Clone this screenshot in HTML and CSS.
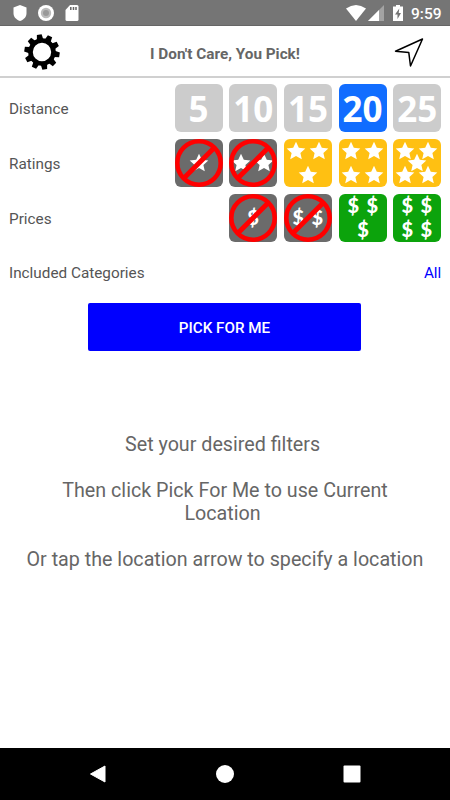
FILE: index.html
```html
<!DOCTYPE html>
<html lang="en">
<head>
    <meta charset="UTF-8">
    <meta name="viewport" content="width=device-width, initial-scale=1.0">
    <title>I Don't Care, You Pick!</title>
    <link rel="stylesheet" href="styles.css">
</head>
<body>
    <!-- shared shapes for the filter tiles -->
    <svg class="defs" width="0" height="0">
        <symbol id="star" viewBox="-10 -10 20 20" overflow="visible">
            <path d="M0-9.2 2.8-3.2 9.3-2.6 4.4 1.9 5.8 8.3 0 5-5.8 8.3-4.4 1.9-9.3-2.6-2.8-3.2Z"/>
        </symbol>
        <symbol id="ban" viewBox="0 0 48 48">
            <path d="M8.5 39.5 39.5 8.5" stroke="#f00" stroke-width="5"/>
            <circle cx="24" cy="24" r="21.7" fill="none" stroke="#f00" stroke-width="4.6"/>
        </symbol>
    </svg>

    <div class="status-bar">
        <div class="status-left">
            <svg width="14" height="18" viewBox="0 0 14 18"><path d="M7 1 13.5 3.500V9c0 4-2.500 6.500-6.500 8C3 15.500.5 13 .5 9V3.500Z" fill="#fff"/></svg>
            <svg width="16" height="16" viewBox="0 0 16 16"><circle cx="8" cy="8" r="8" fill="#fff"/><circle cx="8" cy="8" r="5.200" fill="#bbb"/><circle cx="8" cy="8" r="3" fill="#999"/></svg>
            <svg width="14" height="16" viewBox="0 0 14 16"><path d="M5 0h7q1.500 0 1.500 1.500v13q0 1.500-1.500 1.500H2Q.5 16 .5 14.500V5Z" fill="#fff"/><path d="M5.800 2v3M8.500 2v3M11 2v3" stroke="#666" stroke-width="1.500"/></svg>
        </div>
        <div class="status-right">
            <svg width="20" height="16" viewBox="0 0 20 16"><path d="M0 3.500Q10-3.500 20 3.500L10 16Z" fill="#fff"/></svg>
            <svg width="16" height="16" viewBox="0 0 16 16"><path d="M16 0v16H0Z" fill="#a3a3a3"/><path d="M11 5v11H0Z" fill="#fff"/></svg>
            <svg class="battery" width="10" height="16" viewBox="0 0 10 16"><path d="M0 1.500h3V0h4v1.500h3V16H0Z" fill="#fff"/><path d="M6.300 3.500 2 9.500h2.500V14L8 8H5.700Z" fill="#757575"/></svg>
            <span class="clock">9:59</span>
        </div>
    </div>

    <div class="header">
        <svg class="gear" width="36" height="36" viewBox="-18 -18 36 36">
            <circle r="11.500" fill="none" stroke="#000" stroke-width="4.600"/>
            <g id="teeth"></g>
        </svg>
        <h1>I Don't Care, You Pick!</h1>
        <svg class="arrow" width="30" height="30" viewBox="0 0 30 30"><path d="M1.500 13.200 28.500 1 16.500 28 14.800 14.600Z" fill="none" stroke="#000" stroke-width="1.500" stroke-linejoin="round"/></svg>
    </div>

    <div class="filters">
        <div class="filter-row">
            <span>Distance</span>
            <div class="tiles">
                <div class="tile">5</div>
                <div class="tile">10</div>
                <div class="tile">15</div>
                <div class="tile selected">20</div>
                <div class="tile">25</div>
            </div>
        </div>
        <div class="filter-row">
            <span>Ratings</span>
            <div class="tiles" id="ratings"></div>
        </div>
        <div class="filter-row">
            <span>Prices</span>
            <div class="tiles" id="prices"></div>
        </div>
        <div class="filter-row">
            <span>Included Categories</span>
            <a class="all">All</a>
        </div>
    </div>

    <button class="pick">PICK FOR ME</button>

    <div class="help">
        <p>Set your desired filters&nbsp;</p>
        <p>Then click Pick For Me to use Current Location&nbsp;</p>
        <p>Or tap the location arrow to specify a location</p>
    </div>

    <div class="nav-bar">
        <svg width="18" height="18" viewBox="0 0 18 18"><path d="M1.500 9 16 1v16Z" fill="#fff" stroke="#fff" stroke-linejoin="round"/></svg>
        <svg width="18" height="18" viewBox="0 0 18 18"><circle cx="9" cy="9" r="9" fill="#fff"/></svg>
        <svg width="18" height="18" viewBox="0 0 18 18"><rect x=".5" y=".5" width="17" height="17" rx="1" fill="#fff"/></svg>
    </div>

    <script>
        // positions are inside a 48x48 tile
        const ratings = [
            { off: true, at: [[24, 24]] },
            { off: true, at: [[12, 24], [35, 24]] },
            { at: [[12, 12], [35, 12], [24, 36]] },
            { at: [[12, 12], [35, 12], [12, 36], [35, 36]] },
            { at: [[12, 12], [35, 12], [24, 24], [12, 36], [35, 36]] }
        ];
        const prices = [
            { off: true, at: [[24, 23.5]] },
            { off: true, at: [[14.3, 23.5], [33.3, 23.5]] },
            { at: [[14.3, 11.5], [33.3, 11.5], [24, 35.7]] },
            { at: [[14.3, 11.5], [33.3, 11.5], [14.3, 35.7], [33.3, 35.7]] }
        ];

        const star = ([x, y]) => `<use href="#star" x="${x - 10}" y="${y - 10}" width="20" height="20"/>`;
        const dollar = ([x, y]) => `<text x="${x}" y="${y + 7.2}">$</text>`;

        function drawTiles(id, list, mark) {
            document.getElementById(id).innerHTML = list.map(t =>
                `<svg class="icon-tile ${t.off ? 'off' : ''}" viewBox="0 0 48 48">
                    ${t.at.map(mark).join('')}
                    ${t.off ? '<use href="#ban" width="48" height="48"/>' : ''}
                </svg>`).join('');
        }

        drawTiles('ratings', ratings, star);
        drawTiles('prices', prices, dollar);

        let teeth = '';
        for (let i = 0; i < 10; i++) {
            teeth += `<path d="M-3.200-12.500-2.400-17.700H2.400L3.200-12.500Z" transform="rotate(${i * 36 - 9})"/>`;
        }
        document.getElementById('teeth').innerHTML = teeth;
    </script>
</body>
</html>
```
FILE: styles.css
```css
body {
    margin: 0;
    height: 800px;
    display: flex;
    flex-direction: column;
    font-family: Roboto, sans-serif;
    color: #555;
    background-color: white;
    overflow: hidden;
}
.defs {
    position: absolute;
}
.status-bar {
    height: 26px;
    box-sizing: border-box;
    padding: 1px 8.5px 0 13px;
    display: flex;
    justify-content: space-between;
    align-items: center;
    background-color: #757575;
    border-bottom: 1px solid #666;
}
.status-left {
    display: flex;
    align-items: center;
    gap: 11px;
}
.status-right {
    display: flex;
    align-items: center;
    gap: 2px;
}
.battery {
    margin: 0 6px 0 7px;
}
.clock {
    color: white;
    font-size: 15.5px;
    font-weight: 500;
    line-height: 24px;
    padding-top: 1px;
}
.header {
    height: 52px;
    box-sizing: border-box;
    padding: 0 26px 0 24px;
    display: grid;
    grid-template-columns: 36px 1fr 30px;
    align-items: center;
    border-bottom: 2px solid #d0d0d0;
}
.header h1 {
    margin: 5px 4px 0 0;
    font-size: 15.3px;
    font-weight: bold;
    text-align: center;
    color: #666;
}
.gear {
    margin-top: 2px;
}
.arrow {
    margin-top: 3px;
}
.filters {
    padding: 6.4px 8.7px 0 9px;
}
.filter-row {
    height: 54.7px;
    display: flex;
    justify-content: space-between;
    align-items: flex-start;
    font-size: 15.3px;
    line-height: 50px;
}
.tiles {
    display: flex;
    gap: 6.7px;
}
.tile,
.icon-tile {
    width: 48px;
    height: 48px;
    border-radius: 6px;
}
.tile {
    background-color: #ccc;
    color: white;
    font: bold 35px/50px "Open Sans", sans-serif;
    text-align: center;
}
.tile.selected {
    background-color: #116dff;
}
.icon-tile {
    fill: white;
    overflow: visible;
}
.icon-tile text {
    font: 900 20px Lato, sans-serif;
    text-anchor: middle;
}
#ratings .icon-tile {
    background-color: #ffc012;
}
#prices .icon-tile {
    background-color: #0ca30c;
}
#ratings .off,
#prices .off {
    background-color: #6b6b6b;
}
.all {
    color: #00f;
}
.pick {
    width: 273px;
    height: 48px;
    margin: 0 0 0 88px;
    border: none;
    border-radius: 2px;
    background-color: #00f;
    color: white;
    font: 500 15.2px/50px Roboto, sans-serif;
    padding: 0;
}
.help {
    width: 410px;
    margin: 81.5px auto 0;
    font-size: 19.7px;
    line-height: 23px;
    text-align: center;
    color: #666;
}
.help p {
    margin: 0 0 23px;
}
.nav-bar {
    height: 52px;
    margin-top: auto;
    padding: 0 89px;
    display: flex;
    justify-content: space-between;
    align-items: center;
    background-color: black;
}
```
